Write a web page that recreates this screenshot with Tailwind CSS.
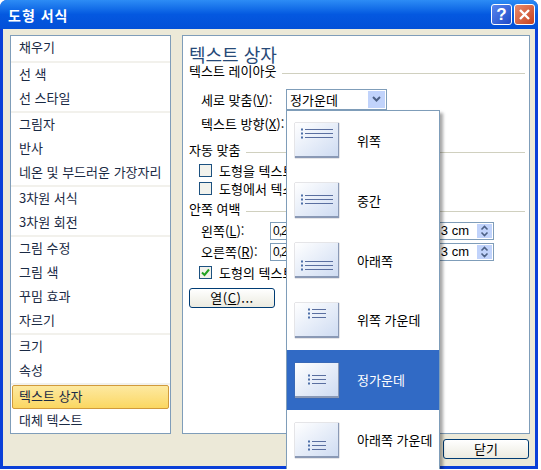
<!DOCTYPE html>
<html lang="ko">
  <head>
    <meta charset="UTF-8" />
    <title>도형 서식</title>
    <script src="https://cdn.jsdelivr.net/npm/@tailwindcss/browser@4"></script>
  </head>
  <body class="m-0 w-[541px] h-[470px] overflow-hidden bg-white font-['Noto_Sans_CJK_KR','Liberation_Sans',sans-serif] text-[13px] leading-[16px] text-black">
    <div class="relative flex flex-col w-[538px] h-[469px] rounded-t-[7px] overflow-hidden bg-[#0a3fd8] pb-[3px] px-[3px]">
      <!-- title bar -->
      <div class="-mx-[3px] flex items-center justify-between h-[29px] pl-[8px] pr-[3px] bg-gradient-to-b from-[#2d8cf5] via-[#0458e0] to-[#0350d8]">
        <span class="text-[14px] font-bold tracking-[1px] text-white">도형 서식</span>
        <div class="flex gap-[2px]">
          <div class="flex items-center justify-center w-[21px] h-[21px] rounded-[3px] border border-white bg-gradient-to-br from-[#5a86ee] to-[#1f49c8]">
            <span class="font-['Liberation_Sans'] text-[17px] font-bold leading-none text-white">?</span>
          </div>
          <div class="flex items-center justify-center w-[21px] h-[21px] rounded-[3px] border border-white bg-gradient-to-br from-[#e98a6c] to-[#c4401c]">
            <svg width="13" height="13" viewBox="0 0 13 13"><path d="M2 2l9 9M11 2l-9 9" stroke="#fff" stroke-width="2.4" fill="none" /></svg>
          </div>
        </div>
      </div>

      <!-- dialog body -->
      <div class="flex flex-col flex-1 bg-[#ece9d8] pl-[7px] pr-[5px] pt-[6px]">
        <div class="flex gap-[11px] h-[399px]">
          <!-- category list -->
          <div class="flex flex-col w-[161px] border border-[#7f9db9] bg-white text-[#1a2a44]">
            <div class="flex items-center h-[25px] pl-[8px] pb-[3px]">채우기</div>
            <div class="h-[2px] bg-[#f2f1ec]"></div>
            <div class="flex items-center h-[24px] pl-[8px] pb-[2px]">선 색</div>
            <div class="flex items-center h-[24px] pl-[8px] pb-[2px]">선 스타일</div>
            <div class="h-[2px] bg-[#f2f1ec]"></div>
            <div class="flex items-center h-[24px] pl-[8px] pb-[2px]">그림자</div>
            <div class="flex items-center h-[24px] pl-[8px] pb-[2px]">반사</div>
            <div class="flex items-center h-[24px] pl-[8px] pb-[2px]">네온 및 부드러운 가장자리</div>
            <div class="h-[2px] bg-[#f2f1ec]"></div>
            <div class="flex items-center h-[24px] pl-[8px] pb-[2px]">3차원 서식</div>
            <div class="flex items-center h-[24px] pl-[8px] pb-[2px]">3차원 회전</div>
            <div class="h-[2px] bg-[#f2f1ec]"></div>
            <div class="flex items-center h-[24px] pl-[8px] pb-[2px]">그림 수정</div>
            <div class="flex items-center h-[24px] pl-[8px] pb-[2px]">그림 색</div>
            <div class="flex items-center h-[24px] pl-[8px] pb-[2px]">꾸밈 효과</div>
            <div class="flex items-center h-[24px] pl-[8px] pb-[2px]">자르기</div>
            <div class="h-[2px] bg-[#f2f1ec]"></div>
            <div class="flex items-center h-[24px] pl-[8px] pb-[2px]">크기</div>
            <div class="flex items-center h-[24px] pl-[8px] pb-[2px]">속성</div>
            <div class="h-[2px] bg-[#f2f1ec]"></div>
            <div class="flex items-center h-[24px] mx-[1px] rounded-[2px] border border-[#d19a3b] bg-gradient-to-b from-[#fde9a0] to-[#fbd760] pl-[6px] pb-[2px]">텍스트 상자</div>
            <div class="flex items-center h-[24px] pl-[8px] pb-[2px]">대체 텍스트</div>
          </div>

          <!-- text box panel -->
          <div class="flex flex-col flex-1 border border-[#7f9db9] bg-white pl-[6px] pr-[4px] pt-[9px]">
            <div class="h-[18px] text-[18px] leading-[18px] text-[#274a78]">텍스트 상자</div>

            <div class="flex gap-[6px] h-[16px]">
              <span>텍스트 레이아웃</span>
              <div class="flex-1 h-px mt-[10px] bg-[#d0d0bf]"></div>
            </div>
            <div class="flex items-center h-[21px] mt-[10px] pl-[12px]">
              <span class="w-[85px]">세로 맞춤(<u>V</u>):</span>
              <div class="flex items-center justify-between w-[101px] h-[21px] border border-[#7f9db9] pl-[3px] pr-[1px]">
                <span>정가운데</span>
                <div class="flex items-center justify-center w-[17px] h-[17px] bg-[#c1d3fb]">
                  <svg width="9" height="7" viewBox="0 0 9 7"><path d="M1 1l3.500 3.500L8 1" stroke="#4d6185" stroke-width="2" fill="none" /></svg>
                </div>
              </div>
            </div>
            <div class="flex items-center h-[22px] mt-[3px] pl-[12px]">텍스트 방향(<u>X</u>):</div>

            <div class="flex gap-[6px] h-[16px] mt-[7px]">
              <span>자동 맞춤</span>
              <div class="flex-1 h-px mt-[10px] bg-[#d0d0bf]"></div>
            </div>
            <div class="flex items-center gap-[7px] h-[17px] mt-[4px] pl-[10px]">
              <div class="w-[13px] h-[13px] border border-[#1c5180] bg-[#f2f2ec]"></div>
              <span>도형을 텍스트</span>
            </div>
            <div class="flex items-center gap-[7px] h-[17px] mt-px pl-[10px]">
              <div class="w-[13px] h-[13px] border border-[#1c5180] bg-[#f2f2ec]"></div>
              <span>도형에서 텍스트</span>
            </div>

            <div class="flex gap-[6px] h-[16px] mt-[4px]">
              <span>안쪽 여백</span>
              <div class="flex-1 h-px mt-[10px] bg-[#d0d0bf]"></div>
            </div>
            <div class="flex items-center h-[18px] mt-[5px] pl-[12px]">
              <span class="w-[69px]">왼쪽(<u>L</u>):</span>
              <div class="flex items-center justify-between flex-1 mr-[31px] h-[18px] border border-[#7f9db9] pl-[2px] pr-[1px] font-['Liberation_Sans']">
                <span class="text-[12px] tracking-[-1px]">0,25 cm</span>
                <div class="flex items-center gap-[8px]">
                  <span><span class="tracking-[3px]">0,1</span>3 cm</span>
                  <svg width="15" height="14" viewBox="0 0 15 14"><rect width="15" height="14" fill="#c1d3fb" /><path d="M4.500 5.500l3-3 3 3M4.500 8.500l3 3 3-3" stroke="#4d6185" stroke-width="1.600" fill="none" /></svg>
                </div>
              </div>
            </div>
            <div class="flex items-center h-[18px] mt-[3px] pl-[12px]">
              <span class="w-[69px]">오른쪽(<u>R</u>):</span>
              <div class="flex items-center justify-between flex-1 mr-[31px] h-[18px] border border-[#7f9db9] pl-[2px] pr-[1px] font-['Liberation_Sans']">
                <span class="text-[12px] tracking-[-1px]">0,25 cm</span>
                <div class="flex items-center gap-[8px]">
                  <span><span class="tracking-[3px]">0,1</span>3 cm</span>
                  <svg width="15" height="14" viewBox="0 0 15 14"><rect width="15" height="14" fill="#c1d3fb" /><path d="M4.500 5.500l3-3 3 3M4.500 8.500l3 3 3-3" stroke="#4d6185" stroke-width="1.600" fill="none" /></svg>
                </div>
              </div>
            </div>
            <div class="flex items-center gap-[7px] h-[17px] mt-[3px] pl-[10px]">
              <div class="flex items-center justify-center w-[13px] h-[13px] border border-[#1c5180] bg-[#f2f2ec]">
                <svg width="9" height="9" viewBox="0 0 9 9"><path d="M1 4.500l2.500 2.500L8 1.500" stroke="#21a121" stroke-width="2" fill="none" /></svg>
              </div>
              <span>도형의 텍스트</span>
            </div>
            <div class="flex items-center justify-center w-[86px] h-[20px] mt-[7px] rounded-[3px] border border-[#003c74] bg-gradient-to-b from-white to-[#ecebe0] tracking-[0.5px]">열(<u>C</u>)...</div>
          </div>
        </div>

        <div class="flex justify-end pr-px mt-[5px]">
          <div class="flex items-center justify-center w-[86px] h-[20px] rounded-[3px] border border-[#003c74] bg-gradient-to-b from-white to-[#ecebe0]">닫기</div>
        </div>
      </div>

      <!-- open dropdown list, lies over the panel -->
      <div class="absolute left-[286px] top-[110px] flex flex-col w-[154px] h-[360px] border border-[#7f9db9] border-b-0 bg-white shadow-[3px_3px_3px_rgba(0,0,0,0.35)]">
        <div class="flex items-center h-[60px] pl-[8px] gap-[18px]">
          <div class="flex flex-col justify-start w-[44px] h-[35px] p-[5px] border-b-2 border-r border-[#8a99b5] bg-gradient-to-br from-white to-[#cfdcf2] shadow-[0_0_1px_#667]">
            <svg width="33" height="11" viewBox="0 0 33 11"><path d="M1 1.500h2M1 5.500h2M1 9.500h2" stroke="#4d6fa8" stroke-width="2" /><path d="M5 1.500h28M5 5.500h28M5 9.500h28" stroke="#5a6fa0" /></svg>
          </div>
          <span>위쪽</span>
        </div>
        <div class="flex items-center h-[60px] pl-[8px] gap-[18px]">
          <div class="flex flex-col justify-center w-[44px] h-[35px] p-[5px] border-b-2 border-r border-[#8a99b5] bg-gradient-to-br from-white to-[#cfdcf2] shadow-[0_0_1px_#667]">
            <svg width="33" height="11" viewBox="0 0 33 11"><path d="M1 1.500h2M1 5.500h2M1 9.500h2" stroke="#4d6fa8" stroke-width="2" /><path d="M5 1.500h28M5 5.500h28M5 9.500h28" stroke="#5a6fa0" /></svg>
          </div>
          <span>중간</span>
        </div>
        <div class="flex items-center h-[60px] pl-[8px] gap-[18px]">
          <div class="flex flex-col justify-end w-[44px] h-[35px] p-[5px] border-b-2 border-r border-[#8a99b5] bg-gradient-to-br from-white to-[#cfdcf2] shadow-[0_0_1px_#667]">
            <svg width="33" height="11" viewBox="0 0 33 11"><path d="M1 1.500h2M1 5.500h2M1 9.500h2" stroke="#4d6fa8" stroke-width="2" /><path d="M5 1.500h28M5 5.500h28M5 9.500h28" stroke="#5a6fa0" /></svg>
          </div>
          <span>아래쪽</span>
        </div>
        <div class="flex items-center h-[60px] pl-[8px] gap-[18px]">
          <div class="flex flex-col justify-start items-center w-[44px] h-[35px] p-[5px] border-b-2 border-r border-[#8a99b5] bg-gradient-to-br from-white to-[#cfdcf2] shadow-[0_0_1px_#667]">
            <svg width="20" height="11" viewBox="0 0 20 11"><path d="M1 1.500h2M1 5.500h2M1 9.500h2" stroke="#4d6fa8" stroke-width="2" /><path d="M5 1.500h14M5 5.500h14M5 9.500h14" stroke="#5a6fa0" /></svg>
          </div>
          <span>위쪽 가운데</span>
        </div>
        <div class="flex items-center h-[60px] pl-[8px] gap-[18px] bg-[#316ac5] text-white">
          <div class="flex flex-col justify-center items-center w-[44px] h-[35px] p-[5px] border-b-2 border-r border-[#8a99b5] bg-gradient-to-br from-white to-[#cfdcf2] shadow-[0_0_1px_#667]">
            <svg width="20" height="11" viewBox="0 0 20 11"><path d="M1 1.500h2M1 5.500h2M1 9.500h2" stroke="#4d6fa8" stroke-width="2" /><path d="M5 1.500h14M5 5.500h14M5 9.500h14" stroke="#5a6fa0" /></svg>
          </div>
          <span>정가운데</span>
        </div>
        <div class="flex items-center h-[60px] pl-[8px] gap-[18px]">
          <div class="flex flex-col justify-end items-center w-[44px] h-[35px] p-[5px] border-b-2 border-r border-[#8a99b5] bg-gradient-to-br from-white to-[#cfdcf2] shadow-[0_0_1px_#667]">
            <svg width="20" height="11" viewBox="0 0 20 11"><path d="M1 1.500h2M1 5.500h2M1 9.500h2" stroke="#4d6fa8" stroke-width="2" /><path d="M5 1.500h14M5 5.500h14M5 9.500h14" stroke="#5a6fa0" /></svg>
          </div>
          <span>아래쪽 가운데</span>
        </div>
      </div>
    </div>
  </body>
</html>
